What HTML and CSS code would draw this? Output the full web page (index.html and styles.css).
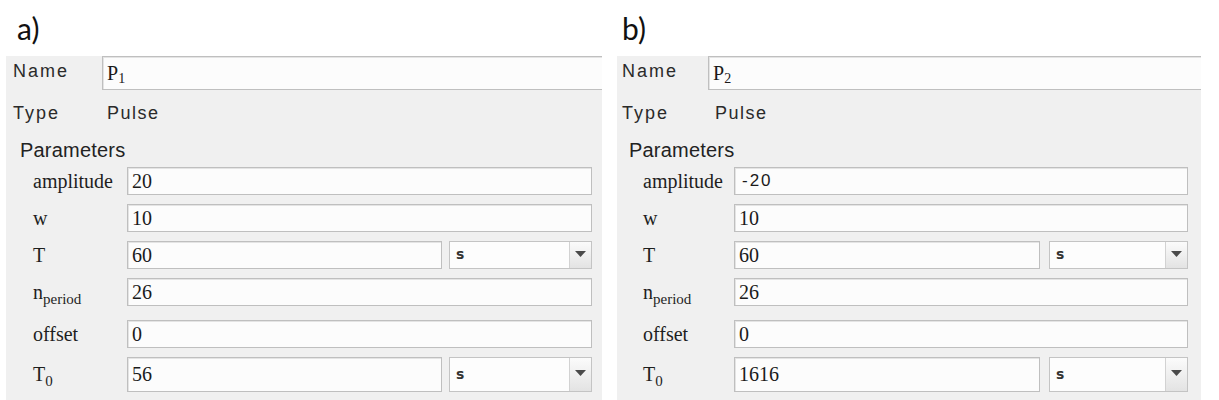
FILE: index.html
```html
<!DOCTYPE html>
<html lang="en">
<head>
  <meta charset="UTF-8">
  <title>Pulse parameters</title>
  <link rel="stylesheet" href="styles.css">
</head>
<body>
  <div class="figures">

    <!-- a) positive pulse -->
    <section class="figure figure-a">
      <div class="caption">a)</div>
      <div class="panel">
        <div class="name-row">
          <span class="ui-label">Name</span>
          <div class="field name-field"><span class="name-value">P<sub>1</sub></span></div>
        </div>
        <div class="type-row">
          <span class="ui-label">Type</span>
          <span class="ui-value">Pulse</span>
        </div>
        <div class="group-title">Parameters</div>
        <div class="params">
          <div class="param">
            <span class="param-label">amplitude</span>
            <div class="field">20</div>
          </div>
          <div class="param">
            <span class="param-label">w</span>
            <div class="field">10</div>
          </div>
          <div class="param">
            <span class="param-label">T</span>
            <div class="field">60</div>
            <div class="unit-select">
              <span class="unit-text">s</span>
              <span class="drop-btn"><svg width="11" height="6" viewBox="0 0 11 6"><path d="M0 0H11L5.5 6Z"/></svg></span>
            </div>
          </div>
          <div class="param param-sub">
            <span class="param-label">n<sub>period</sub></span>
            <div class="field">26</div>
          </div>
          <div class="param">
            <span class="param-label">offset</span>
            <div class="field">0</div>
          </div>
          <div class="param param-t0">
            <span class="param-label">T<sub>0</sub></span>
            <div class="field">56</div>
            <div class="unit-select">
              <span class="unit-text">s</span>
              <span class="drop-btn"><svg width="11" height="6" viewBox="0 0 11 6"><path d="M0 0H11L5.5 6Z"/></svg></span>
            </div>
          </div>
        </div>
      </div>
    </section>

    <!-- b) negative pulse -->
    <section class="figure figure-b">
      <div class="caption">b)</div>
      <div class="panel">
        <div class="name-row">
          <span class="ui-label">Name</span>
          <div class="field name-field"><span class="name-value">P<sub>2</sub></span></div>
        </div>
        <div class="type-row">
          <span class="ui-label">Type</span>
          <span class="ui-value">Pulse</span>
        </div>
        <div class="group-title">Parameters</div>
        <div class="params">
          <div class="param">
            <span class="param-label">amplitude</span>
            <div class="field sans">-20</div>
          </div>
          <div class="param">
            <span class="param-label">w</span>
            <div class="field">10</div>
          </div>
          <div class="param">
            <span class="param-label">T</span>
            <div class="field">60</div>
            <div class="unit-select">
              <span class="unit-text">s</span>
              <span class="drop-btn"><svg width="11" height="6" viewBox="0 0 11 6"><path d="M0 0H11L5.5 6Z"/></svg></span>
            </div>
          </div>
          <div class="param param-sub">
            <span class="param-label">n<sub>period</sub></span>
            <div class="field">26</div>
          </div>
          <div class="param">
            <span class="param-label">offset</span>
            <div class="field">0</div>
          </div>
          <div class="param param-t0">
            <span class="param-label">T<sub>0</sub></span>
            <div class="field">1616</div>
            <div class="unit-select">
              <span class="unit-text">s</span>
              <span class="drop-btn"><svg width="11" height="6" viewBox="0 0 11 6"><path d="M0 0H11L5.5 6Z"/></svg></span>
            </div>
          </div>
        </div>
      </div>
    </section>

  </div>
</body>
</html>
```

FILE: styles.css
```css
body {
  margin: 0;
  background: #fff;
  font-family: "Liberation Sans", Arial, sans-serif;
  color: #222;
}

.figures {
  display: flex;
  gap: 15px;
  padding-left: 6px;
}

/* column sizes for each panel */
.figure-a {
  width: 596px;
  --pad: 7px;
  --name-col: 96px;
  --type-col: 101px;
  --group-pad: 14px;
  --param-pad: 27px;
  --param-col: 121px;
  --right: 10px;
  --unit-w: 143px;
  --unit-gap: 7px;
}

.figure-b {
  width: 584px;
  --pad: 5px;
  --name-col: 91px;
  --type-col: 98px;
  --group-pad: 12px;
  --param-pad: 26px;
  --param-col: 117px;
  --right: 13px;
  --unit-w: 139px;
  --unit-gap: 9px;
}

.caption {
  box-sizing: border-box;
  height: 55px;
  padding: 10px 0 0 11px;
  font-family: Lato, "Open Sans", sans-serif;
  font-size: 30px;
  line-height: 36px;
  color: #111;
}

.figure-b .caption {
  padding-left: 5px;
}

.panel {
  height: 345px;
  background: #f0f0f0;
}

/* text boxes */
.field {
  box-sizing: border-box;
  flex: 1;
  height: 100%;
  padding-left: 4px;
  background: #fcfcfc;
  border: 1px solid #bfbfbf;
  box-shadow: inset 1px 1px 0 #e4e4e4;
  font-family: "Liberation Serif", "Times New Roman", serif;
  font-size: 20px;
  line-height: 26px;
  color: #1a1a1a;
  white-space: nowrap;
}

.field.sans {
  font-family: "Liberation Sans", Arial, sans-serif;
  font-size: 17px;
  letter-spacing: 2px;
  padding-left: 7px;
}

.name-row {
  display: flex;
  align-items: center;
  height: 34px;
  margin-top: 1px;
}

.ui-label {
  box-sizing: border-box;
  flex: 0 0 var(--name-col);
  padding-left: var(--pad);
  padding-bottom: 3px;
  font-size: 18px;
  letter-spacing: 2px;
  color: #2a2a2a;
}

.name-field {
  border-right: none;
  line-height: 32px;
}

.name-value {
  font-size: 20px;
}

.name-value sub {
  font-size: 14px;
  vertical-align: -3px;
}

.type-row {
  display: flex;
  margin-top: 13px;
  line-height: 21px;
}

.type-row .ui-label {
  flex-basis: var(--type-col);
  padding-bottom: 0;
}

.ui-value {
  font-size: 18px;
  letter-spacing: 1.5px;
  color: #2a2a2a;
}

.group-title {
  margin-top: 14px;
  padding-left: var(--group-pad);
  font-size: 20px;
  line-height: 24px;
  letter-spacing: 0.2px;
  color: #222;
}

.params {
  display: flex;
  flex-direction: column;
  gap: 9px;
  margin-top: 5px;
  padding-right: var(--right);
}

.param {
  display: flex;
  align-items: center;
  height: 28px;
}

.param-sub {
  margin-bottom: 5px;
}

.param-t0 {
  height: 35px;
}

.param-t0 .field {
  line-height: 33px;
}

.param-label {
  box-sizing: border-box;
  flex: 0 0 var(--param-col);
  padding-left: var(--param-pad);
  font-family: "Liberation Serif", "Times New Roman", serif;
  font-size: 20px;
  color: #1e1e1e;
}

.param-label sub {
  font-size: 15px;
  vertical-align: -5px;
  line-height: 0;
}

/* unit dropdown */
.unit-select {
  box-sizing: border-box;
  display: flex;
  flex: 0 0 var(--unit-w);
  height: 100%;
  margin-left: var(--unit-gap);
  background: #fdfdfd;
  border: 1px solid #c4c4c4;
}

.unit-text {
  flex: 1;
  padding: 0 0 2px 6px;
  display: flex;
  align-items: center;
  font-family: "DejaVu Sans", Verdana, sans-serif;
  font-size: 14px;
  font-weight: bold;
  color: #333;
}

.drop-btn {
  display: flex;
  align-items: center;
  justify-content: center;
  width: 22px;
  padding-bottom: 3px;
  box-sizing: border-box;
  border-left: 1px solid #d2d2d2;
  background: linear-gradient(#fbfbfb, #e3e3e3);
}

.drop-btn svg {
  fill: #4a4a4a;
}
```
